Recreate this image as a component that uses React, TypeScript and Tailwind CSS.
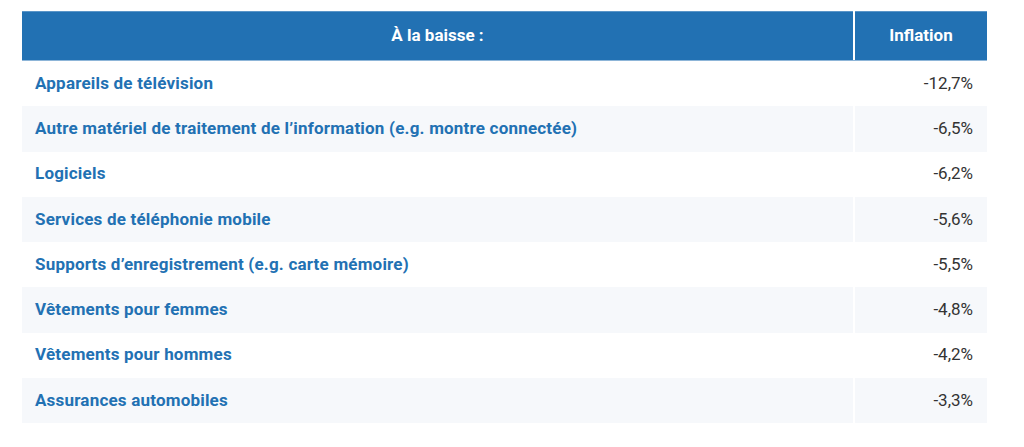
const rows: [string, string][] = [
  ["Appareils de télévision", "-12,7%"],
  ["Autre matériel de traitement de l’information (e.g. montre connectée)", "-6,5%"],
  ["Logiciels", "-6,2%"],
  ["Services de téléphonie mobile", "-5,6%"],
  ["Supports d’enregistrement (e.g. carte mémoire)", "-5,5%"],
  ["Vêtements pour femmes", "-4,8%"],
  ["Vêtements pour hommes", "-4,2%"],
  ["Assurances automobiles", "-3,3%"],
];

export default function App() {
  return (
    <div className="min-h-screen bg-white pl-[22px] pt-[11px] font-['Roboto',sans-serif]">
      <div className="w-[965px]">
        {/* Header */}
        <div className="grid grid-cols-[831px_132px] gap-x-[2px] border-b border-[#8db5d8]">
          <div className="flex h-[49px] items-center justify-center border-t border-[#5a95c8] bg-[#2271b3] text-[17px] font-bold text-white">
            À la baisse :
          </div>
          <div className="flex h-[49px] items-center justify-center border-t border-[#5a95c8] bg-[#2271b3] text-[17px] font-bold text-white">
            Inflation
          </div>
        </div>

        {/* Rows */}
        {rows.map(([label, value], i) => (
          <div
            key={label}
            className="grid grid-cols-[831px_132px] gap-x-[2px]"
          >
            <div
              className={
                i % 2 === 1
                  ? "flex h-[45.25px] items-center bg-[#f6f8fb] px-[13px] text-[17px] font-bold tracking-[0.2px] text-[#2271b3]"
                  : "flex h-[45.25px] items-center bg-white px-[13px] text-[17px] font-bold tracking-[0.2px] text-[#2271b3]"
              }
            >
              {label}
            </div>
            <div
              className={
                i % 2 === 1
                  ? "flex h-[45.25px] items-center justify-end bg-[#f6f8fb] px-[14px] text-[17px] text-[#333]"
                  : "flex h-[45.25px] items-center justify-end bg-white px-[14px] text-[17px] text-[#333]"
              }
            >
              {value}
            </div>
          </div>
        ))}
      </div>
    </div>
  );
}
